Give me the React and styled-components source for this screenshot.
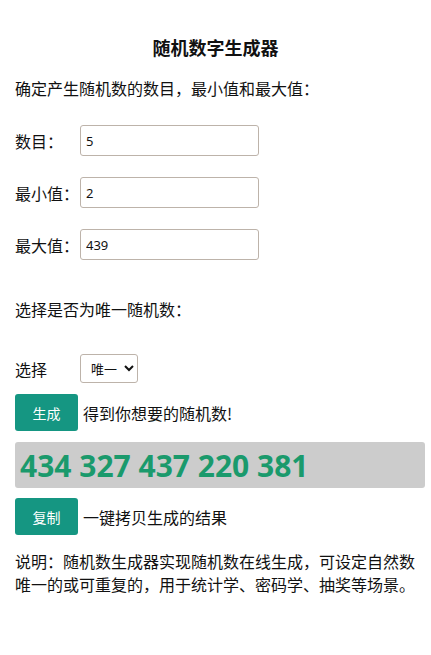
import React from "react";
import styled, { createGlobalStyle } from "styled-components";

const Global = createGlobalStyle`
  html, body { margin: 0; padding: 0; background: #fff; }
  body {
    font-family: "Noto Sans CJK SC", "Noto Sans", sans-serif;
    color: #111;
  }
`;

const Page = styled.div`
  width: 431px;
  padding-bottom: 40px;
`;

const Title = styled.h1`
  margin: 34px 0 0;
  font-size: 18px;
  line-height: 26px;
  font-weight: 700;
  text-align: center;
`;

const Content = styled.div`
  padding: 0 6px 0 15px;
`;

const Para = styled.p`
  margin: ${(p) => p.$mt || 0}px 0 0;
  font-size: 16px;
  line-height: 24px;
`;

const FieldList = styled.div`
  margin-top: 25px;
  display: flex;
  flex-direction: column;
  gap: 21px;
`;

const Row = styled.div`
  display: flex;
  align-items: center;
  margin-top: ${(p) => p.$mt || 0}px;
`;

const Label = styled.label`
  width: 65px;
  font-size: 16px;
  line-height: 24px;
  white-space: nowrap;
  flex: none;
`;

const Input = styled.input`
  box-sizing: border-box;
  width: 179px;
  height: 31px;
  border: 1px solid #bdb3aa;
  border-radius: 3px;
  padding: 0 5px;
  font-family: "Noto Sans", sans-serif;
  font-size: 13px;
  color: #111;
  background: #fff;
  outline: none;
`;

const Select = styled.select`
  box-sizing: border-box;
  width: 58px;
  height: 29px;
  border: 1px solid #bdb3aa;
  border-radius: 3px;
  padding: 0 2px 0 6px;
  font-family: "Noto Sans CJK SC", sans-serif;
  font-size: 13px;
  color: #111;
  background: #fff;
`;

const Button = styled.button`
  box-sizing: border-box;
  width: 63px;
  height: 37px;
  border: none;
  border-radius: 3px;
  background: #159682;
  color: #fff;
  font-family: "Noto Sans CJK SC", sans-serif;
  font-size: 14px;
  margin-right: 5px;
  flex: none;
  cursor: pointer;
`;

const ActionText = styled.span`
  font-size: 16px;
  line-height: 24px;
`;

const Result = styled.div`
  box-sizing: border-box;
  margin-top: 11px;
  height: 46px;
  width: 410px;
  background: #cccccc;
  border-radius: 3px;
  padding-left: 5px;
  display: flex;
  align-items: center;
  font-family: "Open Sans", "Noto Sans", sans-serif;
  font-weight: 700;
  font-size: 30px;
  color: #1a9a6c;
`;

const Desc = styled.p`
  margin: 15px 0 0;
  font-size: 16px;
  line-height: 23px;
`;

export default function App() {
  return (
    <Page>
      <Global />
      <Title>随机数字生成器</Title>
      <Content>
        <Para $mt={16}>确定产生随机数的数目，最小值和最大值：</Para>
        <FieldList>
          <Row>
            <Label>数目：</Label>
            <Input defaultValue="5" />
          </Row>
          <Row>
            <Label>最小值：</Label>
            <Input defaultValue="2" />
          </Row>
          <Row>
            <Label>最大值：</Label>
            <Input defaultValue="439" />
          </Row>
        </FieldList>
        <Para $mt={37}>选择是否为唯一随机数：</Para>
        <Row $mt={33}>
          <Label>选择</Label>
          <Select defaultValue="unique">
            <option value="unique">唯一</option>
            <option value="repeat">可重复</option>
          </Select>
        </Row>
        <Row $mt={11}>
          <Button>生成</Button>
          <ActionText>得到你想要的随机数!</ActionText>
        </Row>
        <Result>434 327 437 220 381</Result>
        <Row $mt={10}>
          <Button>复制</Button>
          <ActionText>一键拷贝生成的结果</ActionText>
        </Row>
        <Desc>
          说明：随机数生成器实现随机数在线生成，可设定自然数唯一的或可重复的，用于统计学、密码学、抽奖等场景。
        </Desc>
      </Content>
    </Page>
  );
}
